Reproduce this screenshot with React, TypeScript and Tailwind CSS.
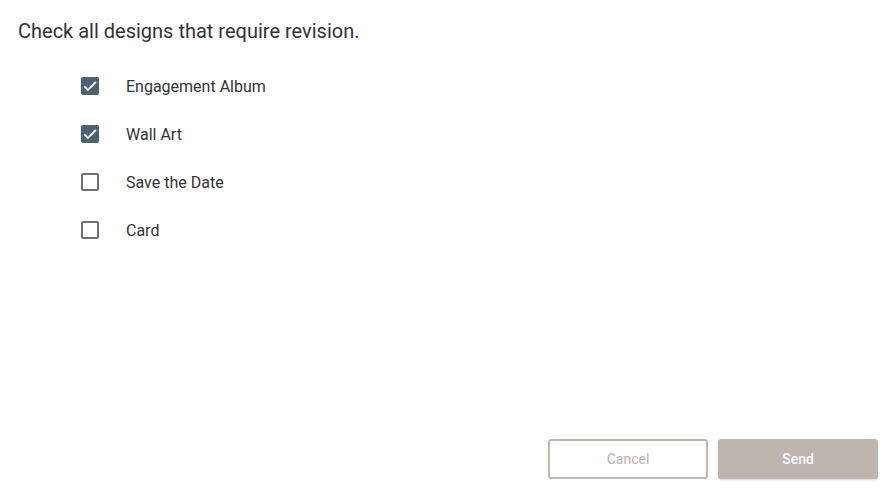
import React, { useState } from "react";

const items = [
  { label: "Engagement Album", checked: true },
  { label: "Wall Art", checked: true },
  { label: "Save the Date", checked: false },
  { label: "Card", checked: false },
];

function Box({ checked }: { checked: boolean }) {
  return checked ? (
    <span className="flex h-[18px] w-[18px] items-center justify-center rounded-[2px] bg-[#4c6372]">
      <svg width="18" height="18" viewBox="0 0 24 24" fill="none">
        <path d="M4.5 12.5 9.2 17.2 19.8 6.6" stroke="#fff" strokeWidth="2.6" />
      </svg>
    </span>
  ) : (
    <span className="block h-[18px] w-[18px] rounded-[2px] border-2 border-[#707070]" />
  );
}

export default function App() {
  const [state, setState] = useState(items.map((i) => i.checked));
  return (
    <div
      className="flex h-[497px] w-[895px] flex-col bg-white text-[#333]"
      style={{ fontFamily: "Roboto, 'Liberation Sans', sans-serif" }}
    >
      <h1 className="pl-[18px] pt-[19px] text-[20px] leading-[24px] font-normal text-[#333]">
        Check all designs that require revision.
      </h1>
      <div className="mt-[19px] flex flex-col pl-[81px]">
        {items.map((it, i) => (
          <label
            key={it.label}
            className="flex h-[48px] cursor-pointer items-center"
            onClick={() => setState((s) => s.map((v, j) => (j === i ? !v : v)))}
          >
            <Box checked={state[i]} />
            <span className="ml-[27px] pt-[1px] text-[16px] text-[#333]">{it.label}</span>
          </label>
        ))}
      </div>
      <div className="mt-auto flex justify-end gap-[10px] pb-[18px] pr-[17px]">
        <button className="h-[40px] w-[160px] rounded-[3px] border-2 border-[#c2b8b2] bg-white text-[14px] text-[#bdb2ab]">
          Cancel
        </button>
        <button className="h-[40px] w-[160px] rounded-[3px] bg-[#bfb5b0] text-[14px] font-medium text-white shadow-[0_1px_2px_rgba(0,0,0,0.15)]">
          Send
        </button>
      </div>
    </div>
  );
}
